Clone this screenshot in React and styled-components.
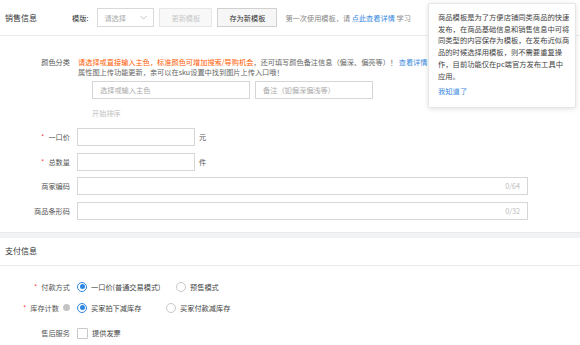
import React from 'react';
import styled, { createGlobalStyle } from 'styled-components';

const GlobalStyle = createGlobalStyle`
  body {
    margin: 0;
    background: #fff;
    font-family: "Noto Sans CJK SC", "Noto Sans", sans-serif;
  }
`;

const Page = styled.div`
  position: relative;
  width: 580px;
  height: 345px;
  overflow: hidden;
  font-size: 7.2px;
  line-height: 10px;
  color: #666;
`;

const SectionHead = styled.div`
  display: flex;
  align-items: center;
  box-sizing: border-box;
  height: ${p => p.h}px;
  padding-left: 5px;
  border-bottom: 1px solid #ebebeb;
`;

const SectionTitle = styled.div`
  width: 67px;
  font-size: 8px;
  color: #333;
`;

const TplLabel = styled.span`
  color: #333;
  margin-right: 9px;
`;

const Select = styled.div`
  box-sizing: border-box;
  width: 57px;
  height: 19px;
  border: 1px solid #d9d9d9;
  display: flex;
  align-items: center;
  justify-content: space-between;
  padding: 0 6px;
  color: #aaa;
  background: #fff;
`;

const Button = styled.div`
  box-sizing: border-box;
  height: 19px;
  width: ${p => p.w}px;
  margin-left: 5px;
  display: flex;
  align-items: center;
  justify-content: center;
  border: 1px solid ${p => (p.disabled ? '#e6e6e6' : '#d0d0d0')};
  background: ${p => (p.disabled ? '#f8f8f8' : '#f6f6f6')};
  color: ${p => (p.disabled ? '#c8c8c8' : '#333')};
`;

const Hint = styled.span`
  margin-left: 8px;
  color: #888;
`;

const Link = styled.span`
  color: #3a8be0;
`;

const Form = styled.div`
  padding-top: 21px;
  display: flex;
  flex-direction: column;
`;

const Row = styled.div`
  display: flex;
  align-items: ${p => (p.top ? 'flex-start' : 'center')};
  gap: 7px;
  margin-top: ${p => p.mt || 0}px;
`;

const Label = styled.div`
  width: 70px;
  flex-shrink: 0;
  display: flex;
  justify-content: flex-end;
  align-items: center;
  color: #555;
  gap: 2px;
`;

const Star = styled.span`
  color: #f33;
  margin-right: 2px;
`;

const Help = styled.span`
  width: 7px;
  height: 7px;
  border-radius: 50%;
  background: #c4c4c4;
  margin-left: 2px;
`;

const ColorBody = styled.div`
  display: flex;
  flex-direction: column;
  padding-left: 1px;
`;

const Orange = styled.span`
  color: #ff5a00;
`;

const InputRow = styled.div`
  display: flex;
  gap: 5px;
  margin: 4px 0 0 14px;
`;

const Input = styled.div`
  box-sizing: border-box;
  width: ${p => p.w}px;
  height: 18px;
  border: 1px solid #d6d6d6;
  display: flex;
  align-items: center;
  justify-content: space-between;
  padding: 0 7px;
  color: #aaa;
`;

const Counter = styled.span`
  color: #bbb;
`;

const SortText = styled.div`
  margin: 9px 0 0 14px;
  color: #c0c0c0;
`;

const Unit = styled.span`
  color: #555;
  margin-left: -3px;
`;

const Band = styled.div`
  height: 6px;
  margin-top: 12px;
  background: #f1f2f4;
  border-top: 1px solid #e9eaec;
  box-sizing: border-box;
`;

const PayForm = styled.div`
  padding-top: 16px;
  display: flex;
  flex-direction: column;
`;

const Option = styled.div`
  display: flex;
  align-items: center;
  gap: 4px;
  width: ${p => (p.w ? `${p.w}px` : 'auto')};
  color: #444;
`;

const Radio = styled.span`
  box-sizing: border-box;
  width: 10px;
  height: 10px;
  border-radius: 50%;
  border: 1px solid ${p => (p.checked ? '#2e86de' : '#c8c8c8')};
  display: flex;
  align-items: center;
  justify-content: center;
  &::after {
    content: '';
    width: 5px;
    height: 5px;
    border-radius: 50%;
    background: ${p => (p.checked ? '#2e86de' : 'transparent')};
  }
`;

const Check = styled.span`
  box-sizing: border-box;
  width: 11px;
  height: 11px;
  border: 1px solid #c8c8c8;
  border-radius: 1px;
  background: #fff;
`;

const Popover = styled.div`
  position: absolute;
  left: 428px;
  top: 3px;
  width: 148px;
  box-sizing: border-box;
  padding: 8px 9px 9px;
  background: #fff;
  border: 1px solid #e6e6e6;
  border-radius: 2px;
  box-shadow: 0 1px 5px rgba(0, 0, 0, 0.12);
  font-size: 7.3px;
  line-height: 11.7px;
  color: #444;
  white-space: nowrap;
`;

const PopLink = styled.div`
  margin-top: 4px;
  color: #3a8be0;
`;

const Chevron = () => (
  <svg width="7" height="5" viewBox="0 0 7 5">
    <path d="M0.5 1 L3.5 4 L6.5 1" fill="none" stroke="#b5b5b5" strokeWidth="0.8" />
  </svg>
);

const App = () => (
  <Page>
    <GlobalStyle />
    <SectionHead h={36}>
      <SectionTitle>销售信息</SectionTitle>
      <TplLabel>模版:</TplLabel>
      <Select>
        <span>请选择</span>
        <Chevron />
      </Select>
      <Button w={53} disabled>更新模板</Button>
      <Button w={60}>存为新模板</Button>
      <Hint>
        第一次使用模板，请 <Link>点此查看详情</Link> 学习
      </Hint>
    </SectionHead>

    <Form>
      <Row top>
        <Label>颜色分类</Label>
        <ColorBody>
          <div>
            <Orange>请选择或直接输入主色，标准颜色可增加搜索/导购机会</Orange>，还可填写颜色备注信息（偏深、偏亮等）！ <Link>查看详情</Link>
          </div>
          <div>属性图上传功能更新，亲可以在sku设置中找到图片上传入口哦！</div>
          <InputRow>
            <Input w={158}>选择或输入主色</Input>
            <Input w={118}>备注（如偏深偏浅等）</Input>
          </InputRow>
          <SortText>开始排序</SortText>
        </ColorBody>
      </Row>

      <Row mt={10}>
        <Label><Star>*</Star>一口价</Label>
        <Input w={118} />
        <Unit>元</Unit>
      </Row>
      <Row mt={6.5}>
        <Label><Star>*</Star>总数量</Label>
        <Input w={118} />
        <Unit>件</Unit>
      </Row>
      <Row mt={6.5}>
        <Label>商家编码</Label>
        <Input w={451}><span /><Counter>0/64</Counter></Input>
      </Row>
      <Row mt={6.5}>
        <Label>商品条形码</Label>
        <Input w={451}><span /><Counter>0/32</Counter></Input>
      </Row>
    </Form>

    <Band />

    <SectionHead h={28}>
      <SectionTitle>支付信息</SectionTitle>
    </SectionHead>

    <PayForm>
      <Row>
        <Label><Star>*</Star>付款方式</Label>
        <Option w={92}><Radio checked />一口价(普通交易模式)</Option>
        <Option><Radio />预售模式</Option>
      </Row>
      <Row mt={11}>
        <Label><Star>*</Star>库存计数<Help /></Label>
        <Option w={82}><Radio checked />买家拍下减库存</Option>
        <Option><Radio />买家付款减库存</Option>
      </Row>
      <Row mt={15}>
        <Label>售后服务</Label>
        <Option><Check />提供发票</Option>
      </Row>
    </PayForm>

    <Popover>
      商品模板是为了方便店铺同类商品的快速<br />
      发布，在商品基础信息和销售信息中可将<br />
      同类型的内容保存为模板，在发布近似商<br />
      品的时候选择用模板，则不需要重复操<br />
      作，目前功能仅在pc端官方发布工具中<br />
      应用。
      <PopLink>我知道了</PopLink>
    </Popover>
  </Page>
);

export default App;
